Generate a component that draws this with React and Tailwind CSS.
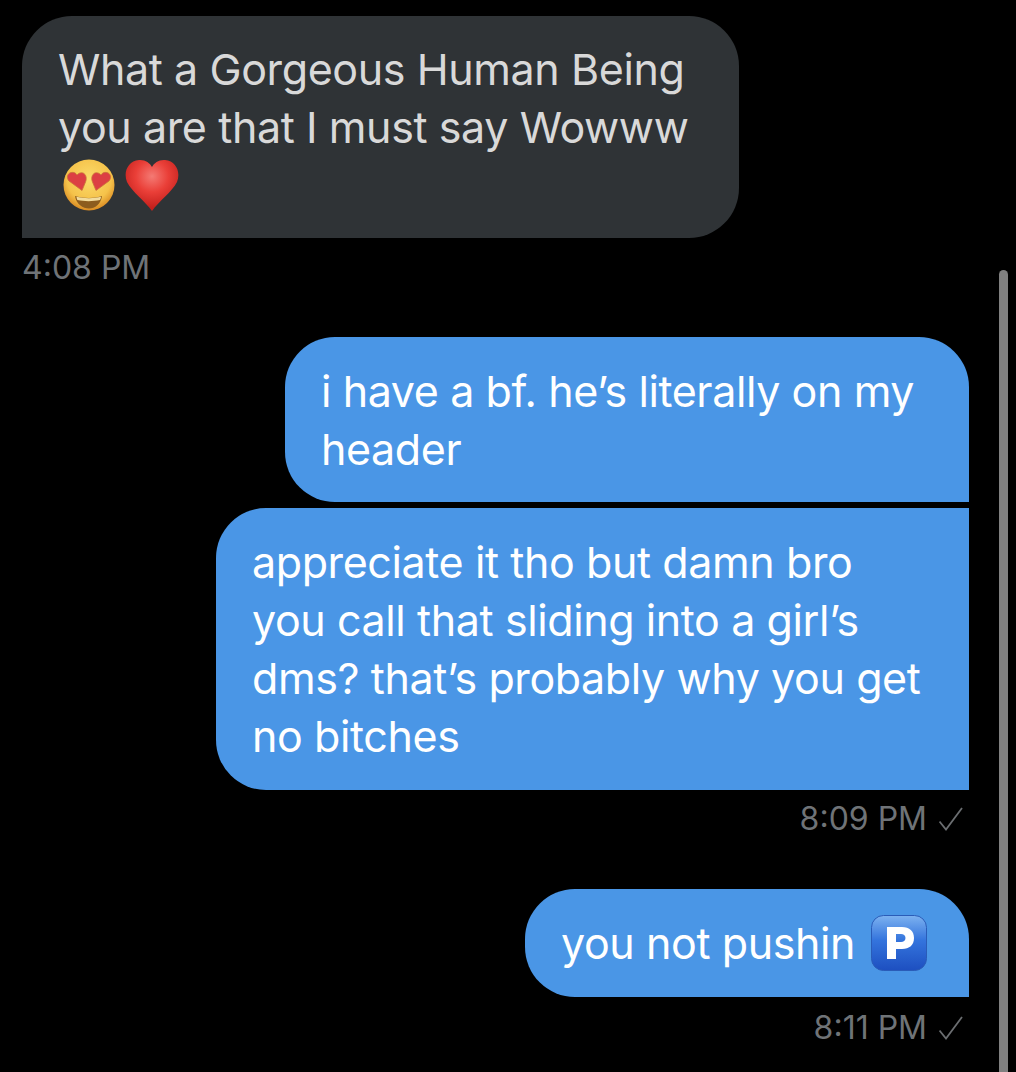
import React from "react";

const FONT = "font-['Inter','Liberation_Sans',sans-serif]";

function Check() {
  return (
    <svg width="24" height="24" viewBox="0 0 24 24" fill="none" className="ml-[12px] mr-[6px]">
      <path d="M0.500 14.500L7 22.500L23 1" stroke="#6b6e71" strokeWidth="1.8" />
    </svg>
  );
}

function SmallHeart({ d }) {
  return <path d={d} fill="#dc3f43" stroke="#c9753a" strokeWidth="0.8" />;
}

function HeartEyes() {
  return (
    <svg width="52" height="52" viewBox="0 0 52 52">
      <defs>
        <radialGradient id="face" cx="50%" cy="38%" r="62%">
          <stop offset="0%" stopColor="#fbdc6c" />
          <stop offset="70%" stopColor="#f5c24a" />
          <stop offset="100%" stopColor="#d98a22" />
        </radialGradient>
      </defs>
      <circle cx="26" cy="26" r="25.5" fill="url(#face)" />
      <path d="M12 37C19 39.500 33 39.500 39 37C38 45 32 49.500 26 49.500C20 49.500 13 45 12 37Z" fill="#8c5c1e" />
      <path d="M13.500 37.800C20 39.700 32 39.700 38 37.800C37.800 39.500 37.400 40.500 37 41C30 42.500 21 42.500 14.500 41C14 40.500 13.700 39.500 13.500 37.800Z" fill="#f3dc9c" />
      <SmallHeart d="M19 31.500L6 22C3 18.500 4.500 14.500 8 13.500C11 12.800 13 14.200 14 16C16 13.700 19 13 21 14.500C23.500 16.500 23.800 20 22.500 23Z" />
      <SmallHeart d="M33 31.500L46 22C49 18.500 47.500 14.500 44 13.500C41 12.800 39 14.200 38 16C36 13.700 33 13 31 14.500C28.500 16.500 28.200 20 29.500 23Z" />
    </svg>
  );
}

function Heart() {
  return (
    <svg width="54" height="52" viewBox="0 0 54 52">
      <defs>
        <radialGradient id="heart" cx="50%" cy="32%" r="62%">
          <stop offset="0%" stopColor="#f47a74" />
          <stop offset="50%" stopColor="#ea3f38" />
          <stop offset="100%" stopColor="#c4201c" />
        </radialGradient>
      </defs>
      <path d="M27 52C20 42 7 33 2 23C-2 13 3 2 14 1C20 0.500 25 4 27 8C29 4 34 0.500 40 1C51 2 56 13 52 23C47 33 34 42 27 52Z" fill="url(#heart)" />
    </svg>
  );
}

function ParkingSign() {
  return (
    <svg width="56" height="56" viewBox="0 0 56 56">
      <defs>
        <linearGradient id="park" x1="0" y1="0" x2="0" y2="1">
          <stop offset="0%" stopColor="#7db2f0" />
          <stop offset="45%" stopColor="#3474dd" />
          <stop offset="100%" stopColor="#1d4fc0" />
        </linearGradient>
      </defs>
      <rect x="0.500" y="0.500" width="55" height="55" rx="12" fill="url(#park)" stroke="#2a5cb8" />
      <path fillRule="evenodd" d="M16 12H31C38.500 12 43 16 43 23C43 30 38.500 34 31 34H25V44H16ZM25 19V27H30C32.500 27 34.500 25.500 34.500 23C34.500 20.500 32.500 19 30 19Z" fill="#ffffff" />
    </svg>
  );
}

export default function App() {
  return (
    <div className={`${FONT} relative h-[1072px] overflow-hidden whitespace-nowrap bg-black text-[43px] leading-[58px] tracking-[-0.4px]`}>
      <div className="absolute right-[8px] top-[270px] bottom-0 w-[9px] rounded-t-full bg-[#808080]" />

      <div className="flex flex-col px-[22px] pt-[16px]">
        <div className="w-[717px] rounded-[50px] rounded-bl-none bg-[#2f3336] px-[36px] py-[24px] text-[#d9d9d9]">
          <div>What a Gorgeous Human Being</div>
          <div>you are that I must say Wowww</div>
          <div className="flex h-[58px] items-center gap-[10px] pl-[5px]">
            <HeartEyes />
            <Heart />
          </div>
        </div>
        <div className="mt-[12px] text-[32px] leading-[36px] tracking-normal text-[#6f7377]">4:08 PM</div>
      </div>

      <div className="mt-[51px] flex flex-col items-end pr-[47px] text-white">
        <div className="w-[684px] rounded-[50px] rounded-br-none bg-[#4a96e6] px-[36px] pt-[25px] pb-[24px]">
          <div>i have a bf. he’s literally on my</div>
          <div>header</div>
        </div>
        <div className="mt-[6px] w-[753px] rounded-[50px] rounded-tr-none rounded-br-none bg-[#4a96e6] px-[36px] py-[25px]">
          <div>appreciate it tho but damn bro</div>
          <div>you call that sliding into a girl’s</div>
          <div>dms? that’s probably why you get</div>
          <div>no bitches</div>
        </div>
        <div className="mt-[11px] flex items-center text-[32px] leading-[36px] tracking-normal text-[#6f7377]">
          <span>8:09 PM</span>
          <Check />
        </div>
        <div className="mt-[52px] flex w-[444px] items-center rounded-[50px] rounded-br-none bg-[#4a96e6] px-[36px] py-[25px]">
          <span>you not pushin</span>
          <span className="ml-[16px]"><ParkingSign /></span>
        </div>
        <div className="mt-[13px] flex items-center text-[32px] leading-[36px] tracking-normal text-[#6f7377]">
          <span>8:11 PM</span>
          <Check />
        </div>
      </div>
    </div>
  );
}
